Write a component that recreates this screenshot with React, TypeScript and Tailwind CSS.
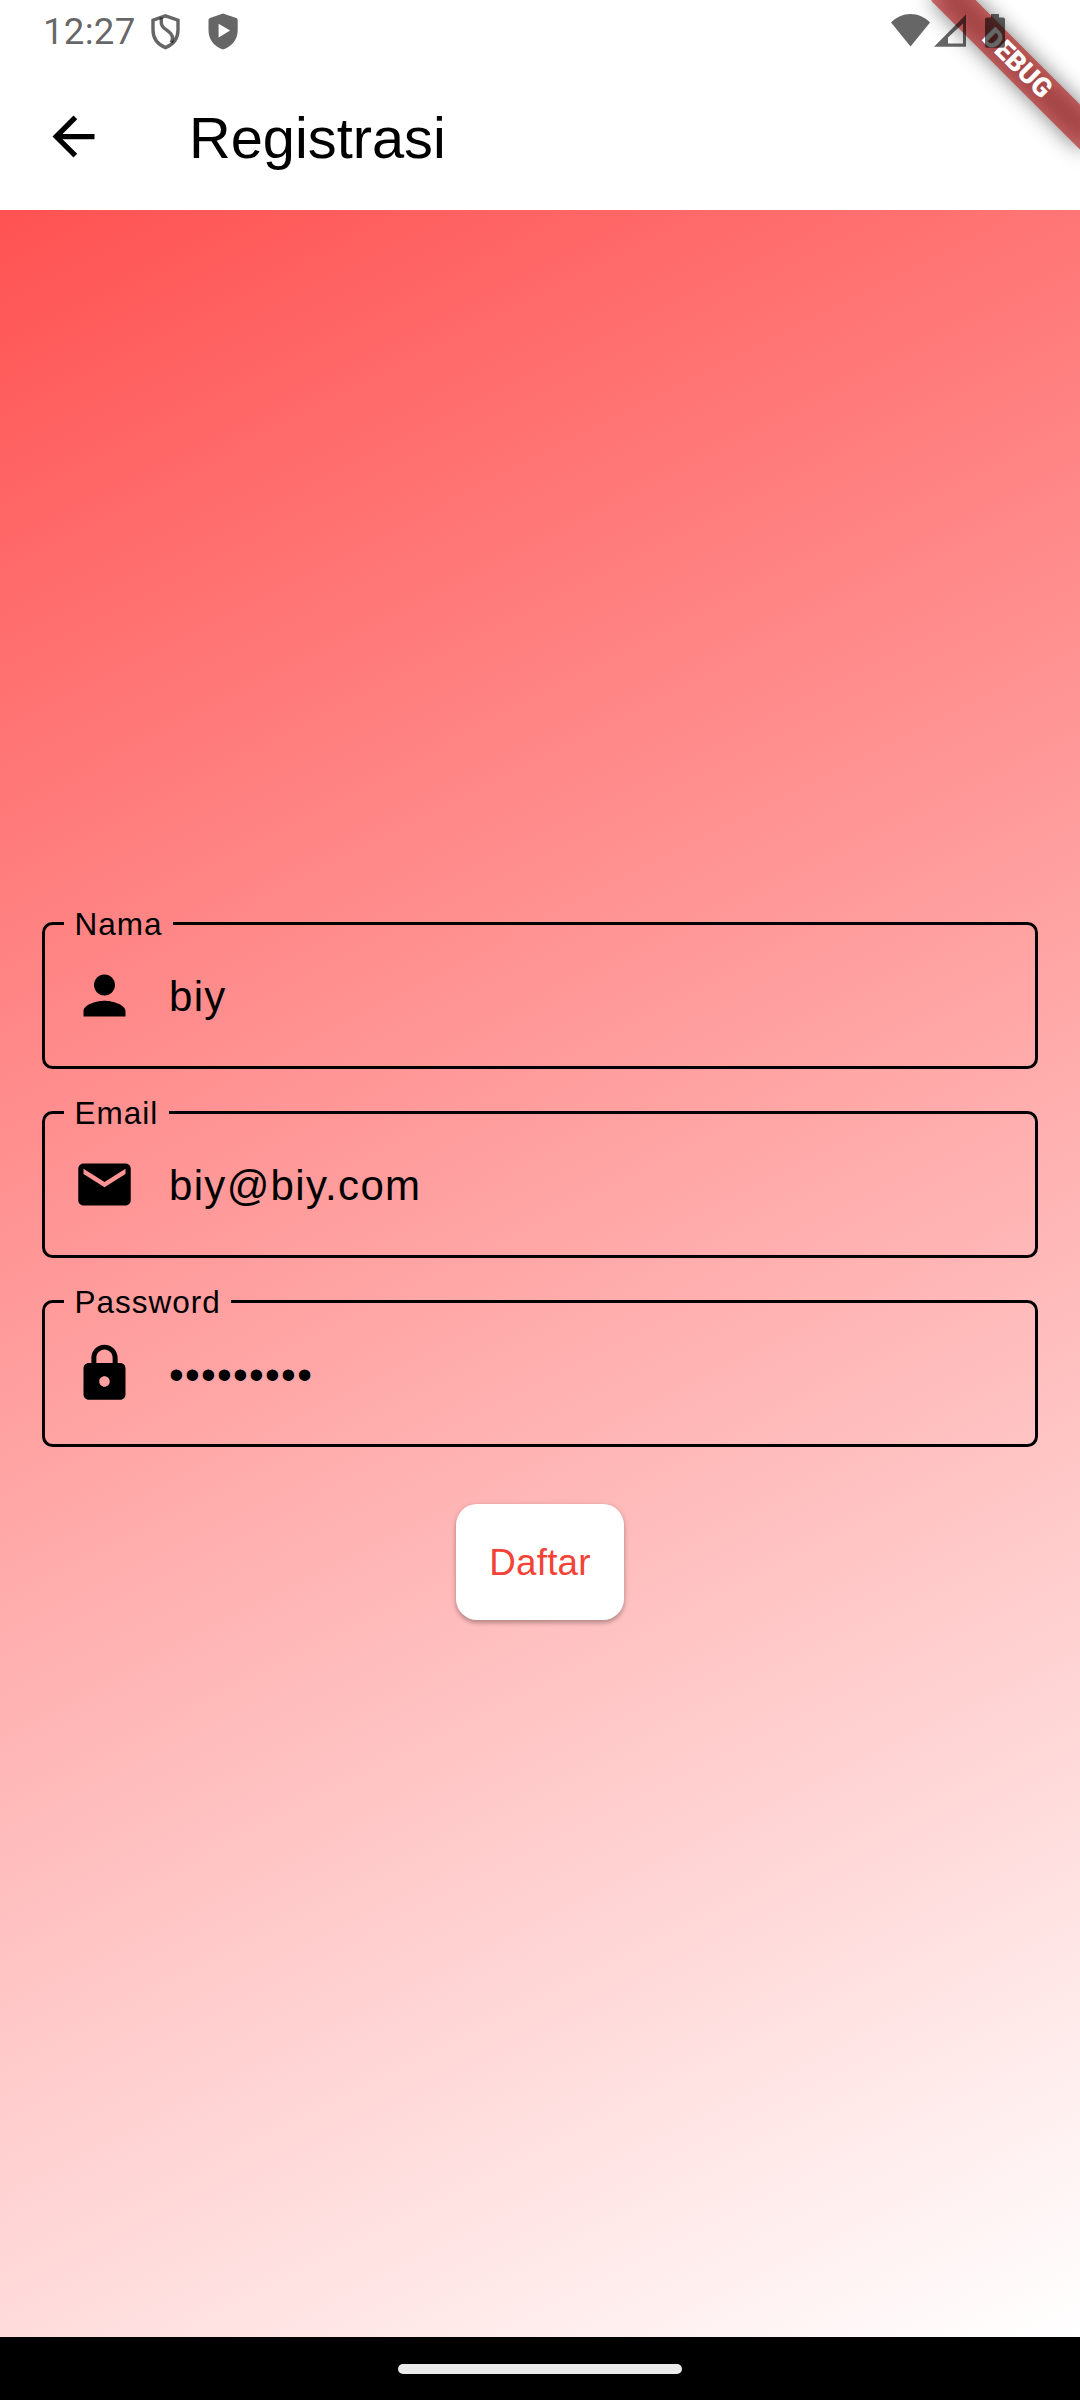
import React from "react";

const ARIAL = "font-['Liberation_Sans',Arial,sans-serif]";

function MaterialIcon({ d, className = "" }: { d: string; className?: string }) {
  return (
    <svg viewBox="0 0 24 24" className={`size-[63px] shrink-0 ${className}`} fill="currentColor" aria-hidden="true">
      <path d={d} />
    </svg>
  );
}

const ICONS = {
  back: "M20 11H7.83l5.59-5.59L12 4l-8 8 8 8 1.41-1.41L7.83 13H20v-2z",
  person: "M12 12c2.21 0 4-1.79 4-4s-1.79-4-4-4-4 1.79-4 4 1.79 4 4 4zm0 2c-2.67 0-8 1.34-8 4v2h16v-2c0-2.66-5.33-4-8-4z",
  mail: "M20 4H4c-1.1 0-1.99.9-1.99 2L2 18c0 1.1.9 2 2 2h16c1.1 0 2-.9 2-2V6c0-1.1-.9-2-2-2zm0 4l-8 5-8-5V6l8 5 8-5v2z",
  lock: "M18 8h-1V6c0-2.76-2.24-5-5-5S7 3.24 7 6v2H6c-1.1 0-2 .9-2 2v10c0 1.1.9 2 2 2h12c1.1 0 2-.9 2-2V10c0-1.1-.9-2-2-2zm-6 9c-1.1 0-2-.9-2-2s.9-2 2-2 2 .9 2 2-.9 2-2 2zm3.1-9H8.9V6c0-1.71 1.39-3.1 3.1-3.1 1.71 0 3.1 1.39 3.1 3.1v2z",
};

function StatusBar() {
  return (
    <div className="absolute inset-x-0 top-0 z-20 flex h-[63px] items-start text-black/60">
      <span className="ml-[43px] mt-[10px] w-[93px] font-[Roboto,sans-serif] text-[36.75px] leading-[43px] tracking-[0.2px]">12:27</span>
      <svg className="ml-[14px] mt-[13px] h-[38px] w-[31px]" viewBox="0 0 31 38" fill="none" stroke="currentColor" strokeWidth="3.4">
        <path d="M15.5 2.8 28 7.2V17c0 8.4-5 14.5-12.5 17.6C8 31.5 3 25.4 3 17V7.2z" />
        <path d="M11.3 4.500v5.500c0 7 11.200 7.500 11.200 15 0 1.500-.5 3-1.300 4.500" />
      </svg>
      <svg className="ml-[27px] mt-[13px] h-[38px] w-[31px]" viewBox="0 0 31 38" fill="currentColor">
        <path fillRule="evenodd" d="M15 .6 28.2 5.100q1.500.5 1.500 2V17.300C29.700 26.500 24 33.500 15 36.600 6 33.500.5 26.500.5 17.300V7.100q0-1.500 1.500-2zM10.600 10.800v13.600l11.500-6.800z" />
      </svg>
      <div className="ml-auto mr-[75px] mt-[13px] flex items-start">
        <svg className="h-[35px] w-[39px]" viewBox="0 0 39 35" fill="currentColor">
          <path d="M19.5 1C12 1 5.5 4 0 9.500L19.500 33.500 39 9.500C33.500 4 27 1 19.500 1z" />
        </svg>
        <svg className="ml-[4px] h-[35px] w-[32px]" viewBox="0 0 32 35" fill="currentColor">
          <path fillRule="evenodd" d="M32 1.500v32.300H0zM29 10.500 14 24.500V30.500H29z" />
        </svg>
        <svg className="ml-[19px] h-[35px] w-[20px]" viewBox="0 0 20 35" fill="currentColor">
          <path d="M6 1h8v3.500h4c1.200 0 2 .8 2 2V32.800c0 1.200-.8 2-2 2H2c-1.200 0-2-.8-2-2V6.500c0-1.200.8-2 2-2h4z" />
        </svg>
      </div>
    </div>
  );
}

function DebugBanner() {
  return (
    <div className="absolute right-0 top-0 z-10 size-[220px] overflow-hidden">
      <div className="absolute left-[115px] top-[73.5px] h-[31.5px] w-[210px] origin-[105px_-73.5px] rotate-45">
        <div className="absolute inset-0 bg-black/50 blur-[10.4px]" />
        <div className="absolute inset-0 flex items-center justify-center bg-[#b71c1ca0] font-[Roboto,sans-serif] text-[26.8px] font-black leading-none text-white">
          DEBUG
        </div>
      </div>
    </div>
  );
}

function Field({ label, value, icon }: { label: string; value: string; icon: string }) {
  return (
    <div className="relative flex h-[147px] items-center pl-[31px]">
      <fieldset className="absolute inset-x-0 -top-[17px] bottom-0 rounded-[10.5px] border-[3px] border-black pl-[19px]">
        <legend className="h-[36px] px-[10.5px] text-[31.5px] leading-[39px] tracking-[0.98px]">{label}</legend>
      </fieldset>
      <MaterialIcon d={icon} />
      <span className="ml-[33px] pt-[2px] text-[42px] leading-[48px] tracking-[1.3125px]">{value}</span>
    </div>
  );
}

export default function App() {
  return (
    <div className={`relative flex h-[2400px] w-[1080px] flex-col overflow-hidden bg-white text-black ${ARIAL}`}>
      <StatusBar />
      <DebugBanner />
      <header className="flex h-[210px] shrink-0 items-center pl-[42px] pt-[63px]">
        <MaterialIcon d={ICONS.back} />
        <h1 className="ml-[84px] pt-[2px] text-[57.75px] leading-[66px]">Registrasi</h1>
      </header>
      <main className="flex h-[2127px] shrink-0 flex-col items-center bg-[linear-gradient(153.08deg,#ff5252,#ffffff)] px-[42px] pt-[712px]">
        <form className="flex w-full flex-col gap-[42px]">
          <Field label="Nama" value="biy" icon={ICONS.person} />
          <Field label="Email" value="biy@biy.com" icon={ICONS.mail} />
          <Field label="Password" value="•••••••••" icon={ICONS.lock} />
        </form>
        <button
          type="button"
          className="mt-[57px] h-[116px] w-[168px] rounded-[21px] bg-white pt-[2px] text-[36.75px] leading-[42px] tracking-[0.26px] text-[#f44336] shadow-[0_3px_4px_rgba(0,0,0,0.22),0_1px_6px_rgba(0,0,0,0.12)]"
        >
          Daftar
        </button>
      </main>
      <footer className="flex h-[63px] shrink-0 items-start justify-center bg-black pt-[27px]">
        <div className="h-[10px] w-[284px] rounded-full bg-[#ebebeb]" />
      </footer>
    </div>
  );
}
